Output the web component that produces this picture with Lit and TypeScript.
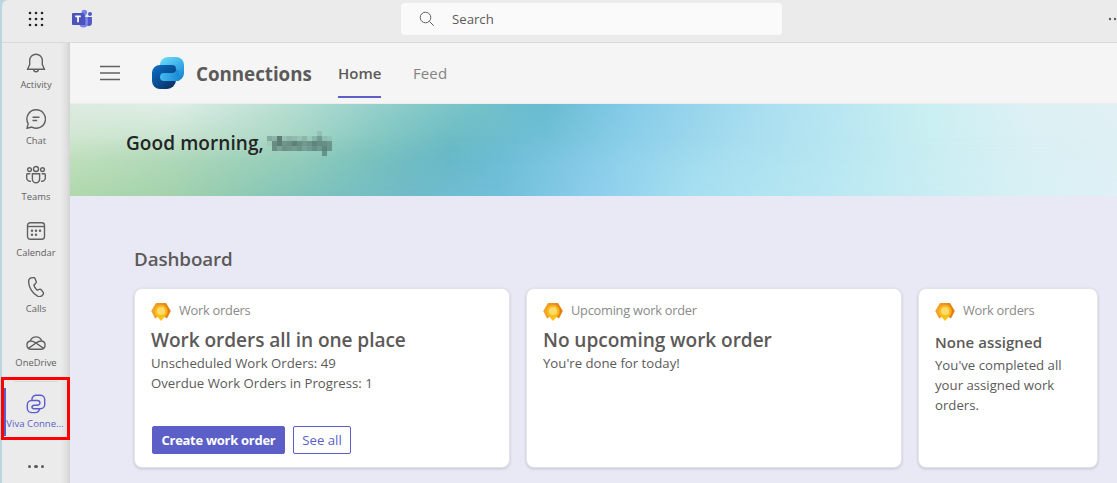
import { LitElement, html, css, svg } from "lit";
import { customElement, property } from "lit/decorators.js";

const teamsLogo = svg`<svg class="logo" width="22" height="20" viewBox="0 0 22 20">
  <circle cx="19" cy="5" r="2" fill="#5059c9"/>
  <path d="M14.500 8h6.400v5.800a3.200 3.200 0 0 1-6.400 0z" fill="#5059c9"/>
  <circle cx="13.300" cy="3.600" r="2.800" fill="#7b83eb"/>
  <path d="M8.500 8h8.500v6a4.500 4.500 0 0 1-9 0z" fill="#7b83eb"/>
  <path d="M10 5.500h3.200a1 1 0 0 1 1 1v9.500h-4z" fill="#3b3f9f" opacity=".75"/>
  <rect x="1" y="4" width="12" height="12" rx="1" fill="#4b53bc"/>
  <path d="M4.200 7.300h5.600M7 7.300v6" stroke="#fff" stroke-width="1.700"/>
</svg>`;

const railIcons: Record<string, unknown> = {
  bell: svg`<path d="M10 1.200a6.300 6.300 0 0 0-6.300 6.300v4.100L1.600 16.200h16.800l-2.100-4.600V7.500A6.300 6.300 0 0 0 10 1.200zM7.700 16.500a2.300 2.300 0 0 0 4.600 0"/>`,
  chat: svg`<path d="M10.200 .8a9.200 9.200 0 1 1-4.300 17.300L1 19.300l1.200-4.600A9.200 9.200 0 0 1 10.200 .8zM6.500 8.200h7M6.500 11.500h4.700"/>`,
  teams: svg`<circle cx="10" cy="4" r="2.500"/><circle cx="3.500" cy="4.600" r="1.900"/><circle cx="16.500" cy="4.600" r="1.900"/><path d="M6.400 8.700h7.200v5.500a3.600 3.600 0 0 1-7.200 0zM4.300 8.700H1.500A.9 .9 0 0 0 .7 9.600v3.300a3.300 3.300 0 0 0 4.200 3.200M15.700 8.700h2.800a.9 .9 0 0 1 .8 .9v3.300a3.300 3.300 0 0 1-4.200 3.200"/>`,
  calendar: svg`<rect x="1.500" y="1.700" width="17" height="16.600" rx="2.700"/><path d="M1.700 5.500h16.600"/><g fill="currentColor" stroke="none"><circle cx="6" cy="9.700" r="1.200"/><circle cx="10" cy="9.700" r="1.200"/><circle cx="14" cy="9.700" r="1.200"/><circle cx="6" cy="13.700" r="1.200"/><circle cx="10" cy="13.700" r="1.200"/></g>`,
  calls: svg`<path d="M5.100 .9l1.800-.4a2 2 0 0 1 2.200 1.200l1 2.500a2 2 0 0 1-.5 2.200L7.900 8c.4 2 1.600 4 3.200 5.200l2.200-.8a2 2 0 0 1 2.200 .7l1.500 2.100a2 2 0 0 1-.2 2.600l-1 1c-1 1-2.500 1.200-3.900 .6C6.500 16.800 2.700 10.500 2.600 4.500 2.600 2.800 3.500 1.300 5.100 .9z"/>`,
  onedrive: svg`<path d="M5 16.300a4.200 4.200 0 0 1-.7-8.300A6 6 0 0 1 15.700 8a4.200 4.200 0 0 1-.7 8.300zM4.300 8c2.500-.2 4 1 5.700 2l7.600 5.400M15.700 8c-2.700-.2-4.300 1-5.700 2l-7.600 5.400"/>`,
  viva: svg`<path d="M5.500 6.500h6a2.400 2.400 0 0 1 0 4.800H8.300a2.400 2.400 0 0 0-2.400 2.400M5.500 6.500A4.300 4.300 0 0 0 1.300 10.800v3.500a4.300 4.300 0 0 0 4.200 4.300h3.800a4.300 4.300 0 0 0 4.200-3.700M5.900 6.400V5.500a4.200 4.200 0 0 1 4.200-4.200h4.300a4.300 4.300 0 0 1 4.300 4.200v5a4.300 4.300 0 0 1-4.300 4.300H8a2.200 2.200 0 0 1-2.100-2.100"/>`,
};

const vivaLogo = svg`<svg width="32" height="32" viewBox="0 0 32 32">
  <defs>
    <linearGradient id="sky" x1=".1" y1="0" x2=".8" y2="1"><stop offset="0" stop-color="#6fdcfb"/><stop offset=".5" stop-color="#3fb4ea"/><stop offset="1" stop-color="#1683d0"/></linearGradient>
    <linearGradient id="deep" x1="0" y1="0" x2=".8" y2="1"><stop offset="0" stop-color="#0b6fc7"/><stop offset=".5" stop-color="#0a529b"/><stop offset="1" stop-color="#0c2f63"/></linearGradient>
    <linearGradient id="arm" x1="0" y1="0" x2="1" y2="0"><stop offset="0" stop-color="#43bbee"/><stop offset="1" stop-color="#1b8ad5"/></linearGradient>
  </defs>
  <rect x="8" y="0" width="24" height="24" rx="8" fill="url(#sky)"/>
  <path d="M8 8h12a4 4 0 0 1 4 4v11a9 9 0 0 1-9 9H8a8 8 0 0 1-8-8v-8a8 8 0 0 1 8-8z" fill="url(#deep)"/>
  <path d="M12 16h8q4 0 4-4l3 2v10H12a4 4 0 0 1 0-8z" fill="url(#arm)"/>
</svg>`;

const badge = svg`<svg width="20" height="20" viewBox="0 0 20 20">
  <defs><linearGradient id="hex" x1="0" x2="1"><stop offset="0" stop-color="#f5a636"/><stop offset="1" stop-color="#e27a08"/></linearGradient>
  <linearGradient id="pin" x1="0" x2="0" y1="0" y2="1"><stop offset="0" stop-color="#f6b11d"/><stop offset="1" stop-color="#fdc514"/></linearGradient></defs>
  <path d="M5 1h10l4.800 8-3.900 7.400-2.100-1.400H6.200l-2.100 1.400L.2 9z" fill="url(#hex)"/>
  <path d="M10 2.700a6.400 6.400 0 0 1 5.200 10.200L10 19l-5.200-6.100A6.400 6.400 0 0 1 10 2.700z" fill="url(#pin)"/>
  <circle cx="10" cy="9" r="4.100" fill="#fddc6c"/>
</svg>`;

const mosaic = [
  [0, 0, 0, 0, 0, 0, 0, 0, 0, 0, 0.12, 0, 0],
  [0.3, 0.24, 0.62, 0.16, 0.22, 0.18, 0.12, 0.2, 0.06, 0.2, 0.38, 0.12, 0.08],
  [0.05, 0.5, 0.6, 0.44, 0.48, 0.58, 0.48, 0.4, 0.44, 0.54, 0.48, 0.46, 0.4],
  [0, 0.48, 0.34, 0.46, 0.42, 0.38, 0.44, 0.32, 0.38, 0.46, 0.38, 0.52, 0.4],
  [0, 0, 0, 0, 0, 0, 0, 0, 0, 0, 0, 0.42, 0],
];

@customElement("work-card")
class WorkCard extends LitElement {
  @property() label = "";
  static styles = css`
    :host { display: block; box-sizing: border-box; height: 180px; padding: 12px 16px 0; background: #fff; border: 1px solid #e3e2ea; border-radius: 8px; box-shadow: 0 1px 3px rgba(0,0,0,.16); }
    .head { display: flex; align-items: flex-start; gap: 8px; height: 20px; font-size: 12.800px; line-height: 18px; letter-spacing: -.24px; color: #8b8a89; }
    svg { display: block; margin-top: 1px; }
  `;
  render() {
    return html`<div class="head">${badge}<span>${this.label}</span></div><slot></slot>`;
  }
}

@customElement("app-root")
class AppRoot extends LitElement {
  static styles = css`
    :host { display: flex; width: 1117px; height: 483px; overflow: hidden; background: #bcd6df; font-family: "Open Sans", "Noto Sans", sans-serif; color: #5c5a59; font-size: 13.2px; box-sizing: border-box; padding-left: 2px; }
    * { box-sizing: border-box; }
    svg { display: block; flex: none; }
    .app { flex: 1; min-width: 0; display: grid; grid-template: 43px 440px / 68px 1fr; background: #ebebeb; border-radius: 6px 0 0 0; }
    .top { grid-column: 1 / 3; display: flex; align-items: center; border-bottom: 1px solid #d9d9d9; padding: 0 0 4px 26px; }
    .logo { margin-left: 27px; }
    .search { margin-left: 308px; width: 381px; height: 32px; background: #fafafa; border-radius: 4px; display: flex; align-items: center; padding-left: 18px; gap: 17px; }
    .more { margin-left: auto; }
    .rail { display: flex; flex-direction: column; background: linear-gradient(90deg, #ebebeb 86%, #dfdfdf 95%, #d2d2d2); }
    .item { height: 56px; display: flex; flex-direction: column; align-items: center; padding-top: 10px; font-size: 9.4px; line-height: 13px; gap: 5px; color: #616161; }
    .item svg { fill: none; stroke: currentColor; stroke-width: 1.4; }
    .item span { }
    .item.drive { height: 54px; gap: 3px; }
    .pinned { position: relative; height: 63px; margin: 0 0 0 -1px; width: 69px; border: 3px solid #f00; display: flex; flex-direction: column; align-items: center; color: #5b5fc7; font-size: 9.6px; line-height: 13px; padding-top: 1px; white-space: nowrap; }
    .pinned::before { content: ""; position: absolute; left: 0; top: 8px; width: 2px; height: 48px; background: #5b5fc7; }
    .rule { width: 44px; height: 1px; background: #d9d9d9; margin-bottom: 12px; }
    .pinned svg { fill: none; stroke: currentColor; stroke-width: 1.4; margin-bottom: 3px; }
    .pinned span { margin-left: -1px; }
    .dots { display: flex; justify-content: center; gap: 3px; padding-top: 25px; }
    .dots i { width: 3.300px; height: 3.300px; border-radius: 50%; background: #5c5c5c; }
    .main { background: #e9e9f6; display: flex; flex-direction: column; min-width: 0; }
    .bar { height: 61px; background: #f5f5f5; display: flex; align-items: center; padding-left: 30px; border-bottom: 1px solid #ececec; }
    .brand { margin-left: 32px; display: flex; align-items: center; gap: 12px; width: 186px; font-size: 18.8px; font-weight: 700; letter-spacing: -.04px; white-space: nowrap; }
    .brand span { padding-top: 2px; }
    .tab { height: 60px; line-height: 61px; font-size: 15px; color: #858483; margin-left: 32px; letter-spacing: .1px; }
    .tab.on { margin: 0; width: 43px; font-weight: 570; letter-spacing: 0; color: #5c5a59; display: flex; flex-direction: column; }
    .tab.on::after { content: ""; height: 2px; margin-top: -8px; background: #5b5fc7; }
    .banner { position: relative; height: 92px; display: flex; align-items: center; padding: 0 0 14px 56px; font-size: 19px; font-weight: 550; letter-spacing: .08px; color: #242424; background: linear-gradient(90deg, #c9e4c6 0, #b4dbbf 110px, #9dd1bb 230px, #7cc4bb 300px, #62b7c3 380px, #70bfd7 450px, #8dd0ea 550px, #a8def0 660px, #bce9f2 790px, #cceff2 870px, #daf0f4 960px, #dff0f4 1047px); }
    .banner::before, .banner::after { content: ""; position: absolute; inset: 0; }
    .banner::before { background: linear-gradient(90deg, #dcebe0 0, #dfeee6 100px, #b9dfd3 210px, #93cfca 310px, #75c2c7 400px, #67bbd0 475px, #85cbe7 560px, #abdff0 700px, #caeff1 860px, #dcf0f4 960px, #e0f0f5 1047px); mask-image: linear-gradient(#000, transparent 65%); }
    .banner::after { background: linear-gradient(90deg, #afd8ab 0, #a3d2ac 100px, #8ac8b5 190px, #79c0be 270px, #70bac8 340px, #70bfda 430px, #8bcdec 520px, #a5dff0 620px, #bfeaf2 800px, #d5f0f3 940px, #dff0f6 1047px); mask-image: linear-gradient(transparent 35%, #000); }
    .banner > * { position: relative; z-index: 1; }
    .banner span { width: 139px; white-space: nowrap; }
    .name { margin: 0 0 0 2px; }
    .body { padding: 50px 0 0 64px; }
    h2 { margin: 0 0 15px; font-size: 18.8px; line-height: 27px; font-weight: 550; letter-spacing: -.1px; }
    .cards { display: grid; grid-template-columns: 376px 376px 180px; gap: 16px; }
    h3 { margin: 6px 0 0; font-size: 19.1px; line-height: 26px; font-weight: 550; white-space: nowrap; letter-spacing: -.07px; }
    h3.small { font-size: 15px; margin-top: 9px; line-height: 24px; font-weight: 600; letter-spacing: .06px; }
    h3.small + p { padding-top: 1px; }
    p { margin: 0; line-height: 20px; white-space: nowrap; }
    .actions { display: flex; gap: 8px; margin: 33px 0 0 1px; }
    .btn { height: 28px; width: 58px; display: flex; align-items: center; justify-content: center; border: 1px solid #5b5fc7; border-radius: 2px; color: #5b5fc7; white-space: nowrap; font-weight: 500; }
    .btn.primary { width: 133px; background: #5b5fc7; color: #fff; font-weight: 700; font-size: 13px; letter-spacing: -.28px; }
  `;

  item(icon: string, label: string, extra = "") {
    return html`<div class="item ${extra}"><svg width="20" height="20" viewBox="0 0 20 20">${railIcons[icon]}</svg><span>${label}</span></div>`;
  }

  render() {
    return html`<div class="app">
      <div class="top">
        <svg width="16" height="16" viewBox="0 0 16 16" fill="#242424">${[2, 8, 14].map((y) => [2, 8, 14].map((x) => svg`<circle cx=${x} cy=${y} r="1.300"/>`))}</svg>
        ${teamsLogo}
        <div class="search"><svg width="16" height="16" viewBox="0 0 16 16" fill="none" stroke="#616161"><circle cx="6.500" cy="6.500" r="5.300"/><path d="M10.400 10.400l4.400 4.400"/></svg><span>Search</span></div>
        <svg class="more" width="9" height="4" viewBox="0 0 9 4" fill="#5c5c5c"><circle cx="2" cy="2" r="1.200"/><circle cx="7" cy="2" r="1.200"/></svg>
      </div>
      <nav class="rail">
        ${this.item("bell", "Activity")} ${this.item("chat", "Chat")} ${this.item("teams", "Teams")}
        ${this.item("calendar", "Calendar")} ${this.item("calls", "Calls")} ${this.item("onedrive", "OneDrive", "drive")}
        <div class="pinned"><div class="rule"></div><svg width="20" height="20" viewBox="0 0 20 20">${railIcons.viva}</svg><span>Viva Conne...</span></div>
        <div class="dots"><i></i><i></i><i></i></div>
      </nav>
      <main class="main">
        <header class="bar">
          <svg width="20" height="16" viewBox="0 0 20 16" stroke="#616161" stroke-width="1.300"><path d="M0 1.500h20M0 8h20M0 14.500h20"/></svg>
          <div class="brand">${vivaLogo}<span>Connections</span></div>
          <div class="tab on"><span>Home</span></div><div class="tab">Feed</div>
        </header>
        <section class="banner"><span>Good morning,</span>
          <svg class="name" width="65" height="25" viewBox="0 0 65 25" fill="#2f4441" shape-rendering="crispEdges">${mosaic.map((row, y) => row.map((o, x) => svg`<rect x=${x * 5} y=${y * 5} width="5" height="5" opacity=${o}/>`))}</svg>
        </section>
        <section class="body">
          <h2>Dashboard</h2>
          <div class="cards">
            <work-card label="Work orders"><h3>Work orders all in one place</h3><p>Unscheduled Work Orders: 49</p><p>Overdue Work Orders in Progress: 1</p>
              <div class="actions"><div class="btn primary">Create work order</div><div class="btn">See all</div></div></work-card>
            <work-card label="Upcoming work order"><h3>No upcoming work order</h3><p>You're done for today!</p></work-card>
            <work-card label="Work orders"><h3 class="small">None assigned</h3><p>You've completed all<br>your assigned work<br>orders.</p></work-card>
          </div>
        </section>
      </main>
    </div>`;
  }
}
